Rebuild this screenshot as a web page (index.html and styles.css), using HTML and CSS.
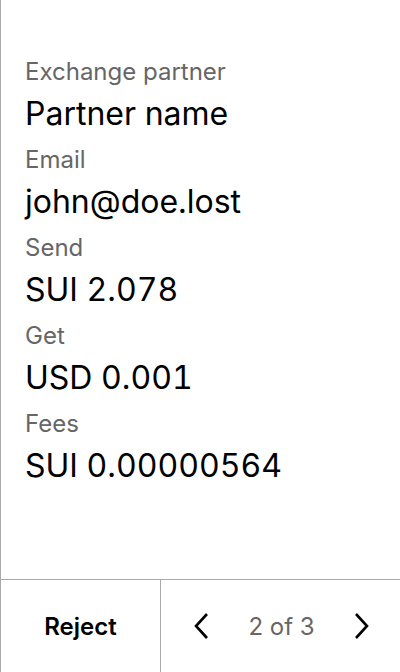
FILE: index.html
```html
<!DOCTYPE html>
<html>
<head>
    <title>Exchange request</title>
    <link rel="stylesheet" href="styles.css">
</head>
<body>
    <div class="screen">
        <div class="details">
            <div class="field">
                <div class="label">Exchange partner</div>
                <div class="value">Partner name</div>
            </div>
            <div class="field">
                <div class="label">Email</div>
                <div class="value">john@doe.lost</div>
            </div>
            <div class="field">
                <div class="label">Send</div>
                <div class="value">SUI 2.078</div>
            </div>
            <div class="field">
                <div class="label">Get</div>
                <div class="value">USD 0.001</div>
            </div>
            <div class="field">
                <div class="label">Fees</div>
                <div class="value">SUI 0.00000564</div>
            </div>
        </div>
        <div class="footer">
            <button class="reject">Reject</button>
            <div class="pager">
                <button class="arrow" aria-label="Previous">
                    <svg width="24" height="28" viewBox="0 0 24 28"><path d="M18 2 L7 14 L18 26" fill="none" stroke="#000" stroke-width="2.6"/></svg>
                </button>
                <span class="count">2 of 3</span>
                <button class="arrow" aria-label="Next">
                    <svg width="24" height="28" viewBox="0 0 24 28"><path d="M6 2 L17 14 L6 26" fill="none" stroke="#000" stroke-width="2.6"/></svg>
                </button>
            </div>
        </div>
    </div>
</body>
</html>
```

FILE: styles.css
```css
body {
    margin: 0;
    font-family: Inter, "Noto Sans", sans-serif;
    background-color: #fff;
}

.screen {
    width: 400px;
    height: 672px;
    box-sizing: border-box;
    border-left: 1px solid #aaa;
    display: flex;
    flex-direction: column;
}

.details {
    flex: 1;
    padding: 54px 24px 0 24px;
}

.field {
    height: 88px;
}

.label {
    font-size: 24px;
    line-height: 36px;
    color: #666;
}

.value {
    font-size: 32px;
    line-height: 48px;
    color: #000;
    font-feature-settings: "tnum";
}

.footer {
    height: 92px;
    border-top: 1px solid #aaa;
    display: flex;
}

.reject {
    width: 160px;
    border: none;
    border-right: 1px solid #aaa;
    background: none;
    font-family: inherit;
    font-size: 24px;
    font-weight: 600;
    color: #000;
    padding: 0;
}

.pager {
    flex: 1;
    display: flex;
    align-items: center;
    justify-content: space-between;
    padding: 0 26px 0 28px;
}

.arrow {
    border: none;
    background: none;
    padding: 0;
    display: flex;
}

.count {
    font-size: 24px;
    color: #666;
}
```
